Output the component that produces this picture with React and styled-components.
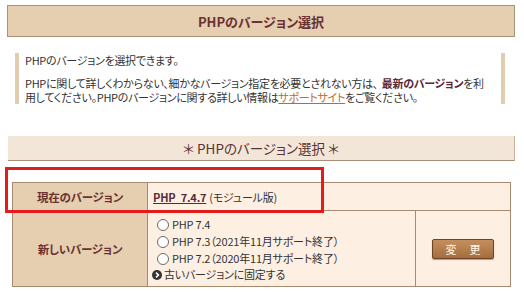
import styled, { createGlobalStyle } from "styled-components";

const GlobalStyle = createGlobalStyle`
  body {
    margin: 0;
    background: #fff;
    font-family: "Noto Sans CJK JP", "Noto Sans", sans-serif;
    font-feature-settings: "palt";
    color: #333;
  }
`;

const Page = styled.div`
  width: 524px;
  padding-top: 5px;
`;

const TitleBar = styled.div`
  margin: 0 9px 0 7px;
  height: 30px;
  display: flex;
  align-items: center;
  justify-content: center;
  background: #e6cfb0;
  border: 1px solid #a8927a;
  color: #6a3232;
  font-weight: 700;
  font-size: 13px;
`;

const Info = styled.div`
  margin: 16px 19px 0 15px;
  padding: 0 10px 0 6px;
  border-left: 4px solid #e2cdb0;
  border-right: 4px solid #e2cdb0;
  font-size: 11px;
  letter-spacing: -0.3px;
  line-height: 14px;
`;

const Para = styled.p`
  margin: 0 0 ${(p) => p.$gap || 0}px;
`;

const Strong = styled.b`
  color: #5c2838;
  font-weight: 700;
  margin-left: 4px;
`;

const SupportLink = styled.a`
  color: #c0692a;
  text-decoration: underline;
`;

const SectionBar = styled.div`
  margin: 32px 9px 0 8px;
  height: 24px;
  display: flex;
  align-items: center;
  justify-content: center;
  background: #f2e6d8;
  border-bottom: 1px solid #a89078;
  border-right: 1px solid #c8b29a;
  color: #5a3434;
  font-size: 13.5px;
`;

const TableWrap = styled.div`
  position: relative;
  margin: 21px 14px 0 12px;
`;

const Table = styled.table`
  width: 100%;
  table-layout: fixed;
  border-collapse: collapse;
  font-size: 11px;
  letter-spacing: -0.2px;
`;

const Col = styled.col`
  width: ${(p) => p.$w}px;
`;

const Label = styled.th`
  background: #e6cfb0;
  border: 1px solid #a88a70;
  color: #6a3232;
  font-weight: 700;
  font-size: 11.5px;
  text-align: center;
  height: ${(p) => p.$h}px;
  padding: 0;
`;

const Cell = styled.td`
  background: #fdf0e3;
  border: 1px solid #a88a70;
  padding: ${(p) => p.$pad || "0 5px"};
  vertical-align: middle;
  text-align: ${(p) => (p.$center ? "center" : "left")};
`;

const Current = styled.a`
  color: #5a2a3a;
  font-weight: 700;
  text-decoration: underline;
  word-spacing: 3px;
  margin-right: 3px;
`;

const Options = styled.div`
  display: flex;
  flex-direction: column;
  line-height: 17px;
`;

const Option = styled.label`
  display: flex;
  align-items: center;
  gap: 3px;
`;

const Radio = styled.input`
  appearance: none;
  margin: 0 0 0 5px;
  width: 12px;
  height: 12px;
  border: 1px solid #6a6a6a;
  border-radius: 50%;
  background: #fff;
`;

const OldLink = styled.div`
  display: flex;
  align-items: center;
  gap: 2px;
  line-height: 13px;
  margin-top: 1px;
`;

const ChangeButton = styled.button`
  width: 62px;
  height: 20px;
  display: inline-flex;
  align-items: center;
  justify-content: space-around;
  padding: 0 6px;
  background: linear-gradient(#c48f5e, #a56d3d);
  border: 1px solid #6e4424;
  border-radius: 2px;
  box-shadow: 0 1px 1px rgba(0, 0, 0, 0.35);
  color: #fff8ee;
  font-family: inherit;
  font-size: 11px;
`;

const RedBox = styled.div`
  position: absolute;
  left: -7px;
  top: -15px;
  width: 313px;
  height: 40px;
  border: 3px solid #e31b1b;
  pointer-events: none;
`;

function ArrowCircle() {
  return (
    <svg width="10" height="10" viewBox="0 0 10 10">
      <circle cx="5" cy="5" r="5" fill="#333" />
      <path d="M4 2.6 L6.4 5 L4 7.4" stroke="#fff" strokeWidth="1.6" fill="none" />
    </svg>
  );
}

const versions = ["PHP 7.4", "PHP 7.3（2021年11月サポート終了）", "PHP 7.2（2020年11月サポート終了）"];

export default function App() {
  return (
    <Page>
      <GlobalStyle />
      <TitleBar>PHPのバージョン選択</TitleBar>
      <Info>
        <Para $gap={9}>PHPのバージョンを選択できます。</Para>
        <Para>
          PHPに関して詳しくわからない、細かなバージョン指定を必要とされない方は、
          <Strong>最新のバージョン</Strong>を利用してください。PHPのバージョンに関する詳しい情報は
          <SupportLink>サポートサイト</SupportLink>をご覧ください。
        </Para>
      </Info>
      <SectionBar>＊ PHPのバージョン選択 ＊</SectionBar>
      <TableWrap>
        <Table>
          <colgroup>
            <Col $w={135} />
            <Col $w={268} />
            <Col $w={95} />
          </colgroup>
          <tbody>
            <tr>
              <Label $h={27}>現在のバージョン</Label>
              <Cell colSpan={2}>
                <Current>PHP 7.4.7</Current>(モジュール版)
              </Cell>
            </tr>
            <tr>
              <Label $h={75}>新しいバージョン</Label>
              <Cell $pad="0 4px">
                <Options>
                  {versions.map((v) => (
                    <Option key={v}>
                      <Radio type="radio" name="ver" />
                      {v}
                    </Option>
                  ))}
                  <OldLink>
                    <ArrowCircle />
                    古いバージョンに固定する
                  </OldLink>
                </Options>
              </Cell>
              <Cell $center>
                <ChangeButton>
                  <span>変</span>
                  <span>更</span>
                </ChangeButton>
              </Cell>
            </tr>
          </tbody>
        </Table>
        <RedBox />
      </TableWrap>
    </Page>
  );
}
